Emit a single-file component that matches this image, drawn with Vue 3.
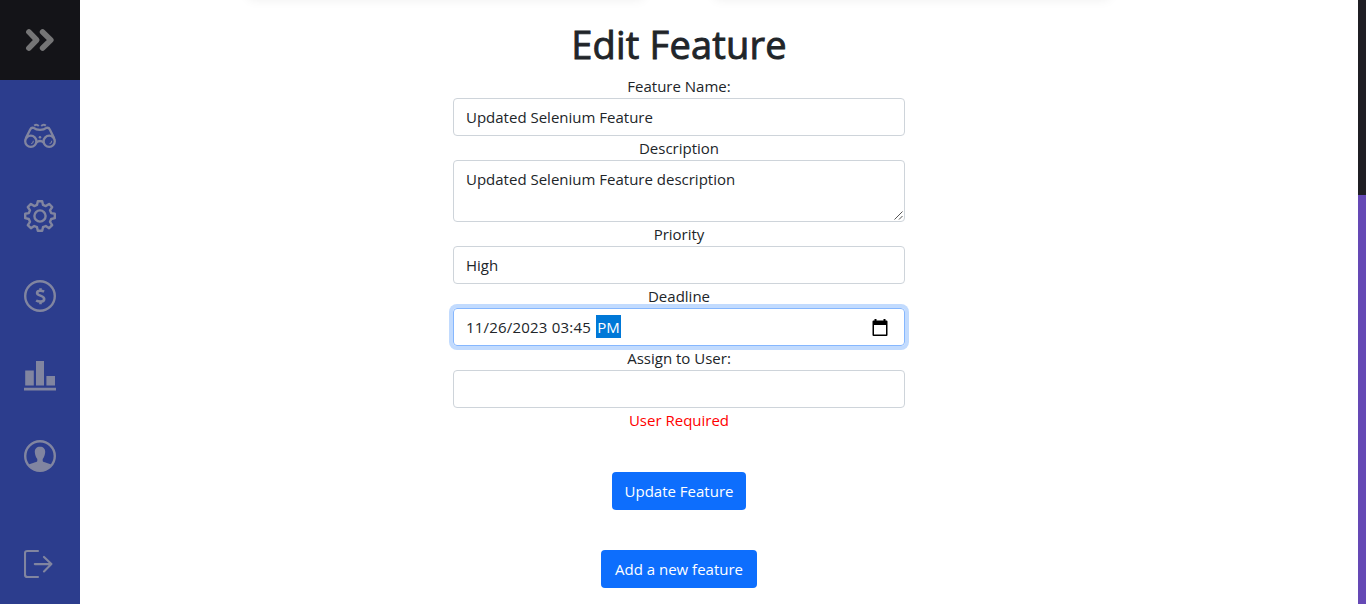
<script setup>
const fields = [
  { label: 'Feature Name:', value: 'Updated Selenium Feature', kind: 'text' },
  { label: 'Description', value: 'Updated Selenium Feature description', kind: 'area' },
  { label: 'Priority', value: 'High', kind: 'text' },
  { label: 'Deadline', value: '11/26/2023 03:45', kind: 'date' },
  { label: 'Assign to User:', value: '', kind: 'text' }
]
</script>

<template>
  <div class="page">
    <nav class="sidebar">
      <div class="toggle">
        <svg width="32" height="32" viewBox="0 0 32 32" fill="none" stroke="currentColor" stroke-width="5.6" stroke-linecap="round" stroke-linejoin="round">
          <path d="M4.9 7.9 12.7 16 4.9 24.1M18.6 7.9 26.8 16 18.6 24.1" />
        </svg>
      </div>
      <div class="item">
        <svg width="32" height="32" viewBox="0 0 32 32" fill="none" stroke="currentColor" stroke-width="2.3">
          <circle cx="6.8" cy="21.3" r="5.6" />
          <circle cx="25.2" cy="21.3" r="5.6" />
          <path d="M1.8 18.2 6.2 9.4Q7.3 7.2 9.6 7.9Q12 9.9 16 9.9T22.4 7.9Q24.7 7.2 25.8 9.4L30.2 18.2M12.2 22.6Q16 19.4 19.8 22.6" />
          <path d="M10.2 5.6Q12.6 3.8 14.8 6M17.2 6Q19.4 3.8 21.8 5.6" stroke-width="2" />
          <path d="M9.4 20.8Q9.3 23.2 7.2 23.8M27.8 20.8Q27.7 23.2 25.6 23.8" stroke-width="1.1" />
          <circle cx="16" cy="17.2" r="1.3" fill="currentColor" stroke="none" />
        </svg>
      </div>
      <div class="item">
        <svg width="32" height="32" viewBox="0 0 32 32" fill="none" stroke="currentColor" stroke-width="2.4" stroke-linejoin="round">
          <path d="M13.8 1.2h4.4l.8 3.7 2.8 1.2 3.3-2.2 3.1 3.1-2.2 3.3 1.2 2.8 3.6.7v4.4l-3.6.8-1.2 2.8 2.2 3.3-3.1 3.1-3.3-2.2-2.8 1.2-.8 3.6h-4.4l-.8-3.6-2.8-1.2-3.3 2.2-3.1-3.1L6 21.8 4.8 19l-3.6-.8v-4.4l3.6-.7L6 10.3 3.8 7l3.1-3.1 3.3 2.2L13 4.9z" />
          <circle cx="16" cy="16" r="5.6" />
        </svg>
      </div>
      <div class="item">
        <svg width="32" height="32" viewBox="0 0 32 32" fill="none" stroke="currentColor">
          <circle cx="16" cy="16" r="14.8" stroke-width="2.4" />
          <path d="M20.1 11.6Q18.5 10.7 16.4 10.7C13.9 10.7 13.1 11.7 13.1 13C13.1 16.1 20.2 15.2 20.2 18.9C20.2 20.6 18.8 21.5 16.3 21.5Q13.8 21.5 12.1 20.5M16.5 8.2v2.4M16.5 21.4v2.8" stroke-width="2.6" />
        </svg>
      </div>
      <div class="item">
        <svg width="32" height="32" viewBox="0 0 32 32" fill="currentColor">
          <path d="M1.2 10.4h8.6v15.2H1.2zM12 1.1h8v24.5h-8zM22.4 16.1H31v9.5h-8.6zM0 27.8h32v2.8H0z" />
        </svg>
      </div>
      <div class="item">
        <svg width="32" height="32" viewBox="0 0 32 32">
          <circle cx="16" cy="16" r="14.8" fill="none" stroke="currentColor" stroke-width="2.4" />
          <path d="M16 6.7C19.3 6.7 21.3 8.7 21.2 12C21.1 14.8 20 17.6 18.7 18.9V21.1C18.7 22.4 25 23 27.7 25.1Q23 31 16 31T4.3 25.1C7 23 13.3 22.4 13.3 21.1V18.9C12 17.6 10.9 14.8 10.8 12C10.7 8.7 12.7 6.7 16 6.7Z" fill="currentColor" />
        </svg>
      </div>
      <div class="item logout">
        <svg width="32" height="32" viewBox="0 0 32 32" fill="none" stroke="currentColor" stroke-width="2.1" stroke-linecap="round" stroke-linejoin="round">
          <path d="M14 3H3.4Q1 3 1 5.4V26.6Q1 29 3.4 29H14M10.8 16.1H27.2M20 8.9 27.4 16.1 20 23.5" />
        </svg>
      </div>
    </nav>

    <main class="content">
      <div class="cards"><div class="card"></div><div class="card"></div></div>
      <h1>Edit Feature</h1>
      <form class="form" @submit.prevent>
        <template v-for="f in fields" :key="f.label">
          <label>{{ f.label }}</label>
          <div class="control" :class="f.kind">
            <span class="value">{{ f.value }}</span>
            <span v-if="f.kind === 'date'" class="selected">PM</span>
            <svg v-if="f.kind === 'date'" class="calendar" width="16" height="18" viewBox="0 0 16 18">
              <path d="M2.5 0h2v1.5h7V0h2v1.5H14.5q1 0 1 1V16q0 1-1 1H1.5q-1 0-1-1V2.5q0-1 1-1h1zM2 6v9.5h12V6z" fill="#000" fill-rule="evenodd" />
            </svg>
            <svg v-if="f.kind === 'area'" class="grip" width="9" height="9" viewBox="0 0 9 9">
              <path d="M.5 8.5l8-8M5 8.5 8.5 5" fill="none" stroke="#555" stroke-width="1" />
            </svg>
          </div>
        </template>
        <div class="error">User Required</div>
        <button class="update">Update Feature</button>
        <button class="add">Add a new feature</button>
      </form>
    </main>

    <aside class="edge"></aside>
  </div>
</template>

<style>
body { margin: 0; overflow: hidden; }
</style>

<style scoped>
.page {
  display: flex;
  width: 1366px;
  height: 604px;
  overflow: hidden;
  background: #fff;
  color: #212529;
  font: 15px/24px "Segoe UI", "Open Sans", "Noto Sans", sans-serif;
}
.sidebar {
  width: 80px;
  flex: none;
  display: flex;
  flex-direction: column;
  background: #2c3d8d;
  color: #8185a0;
}
.toggle, .item { height: 80px; display: flex; align-items: center; justify-content: center; flex: none; }
.toggle { background: #141418; color: #757576; margin-bottom: 16px; }
.item svg, .toggle svg { display: block; }
.logout { margin-top: auto; }
.content {
  flex: 1;
  box-sizing: border-box;
  padding-right: 80px;
  display: flex;
  flex-direction: column;
  align-items: center;
}
.cards { height: 0; width: 860px; display: flex; justify-content: space-between; }
.card { height: 20px; width: 394px; flex: none; margin-top: -21px; box-shadow: 0 0 12px rgba(0, 0, 0, .075); }
h1 {
  height: 48px;
  margin: 18px 0 8px;
  font-size: 38px;
  line-height: 52px;
  font-weight: 400;
  letter-spacing: .2px;
  -webkit-text-stroke: .9px currentColor;
  white-space: nowrap;
}
.form { width: 452px; display: flex; flex-direction: column; align-items: center; white-space: nowrap; }
label, .error { height: 24px; }
.error { color: #f00; }
.control {
  width: 452px;
  height: 38px;
  box-sizing: border-box;
  padding: 6px 12px;
  border: 1px solid #ced4da;
  border-radius: 4px;
  display: flex;
  position: relative;
}
.area { height: 62px; }
.grip { position: absolute; right: 1px; bottom: 1px; }
.date { border-color: #86b7fe; box-shadow: 0 0 0 4px #c2dbfe; }
.date .value { width: 125px; letter-spacing: .2px; }
.selected { background: #0078d7; color: #fff; margin-left: 5px; height: 23px; width: 25px; text-align: center; }
.calendar { margin: 4px 4px 0 auto; }
button {
  height: 38px;
  box-sizing: border-box;
  padding: 0;
  border: 0;
  border-radius: 4px;
  background: #0d6efd;
  color: #fff;
  font: inherit;
}
.update { margin-top: 40px; width: 134px; }
.add { margin-top: 40px; width: 156px; }
.edge { width: 8px; flex: none; background: linear-gradient(#1f1e24 195px, #6549b5 195px); }
</style>
